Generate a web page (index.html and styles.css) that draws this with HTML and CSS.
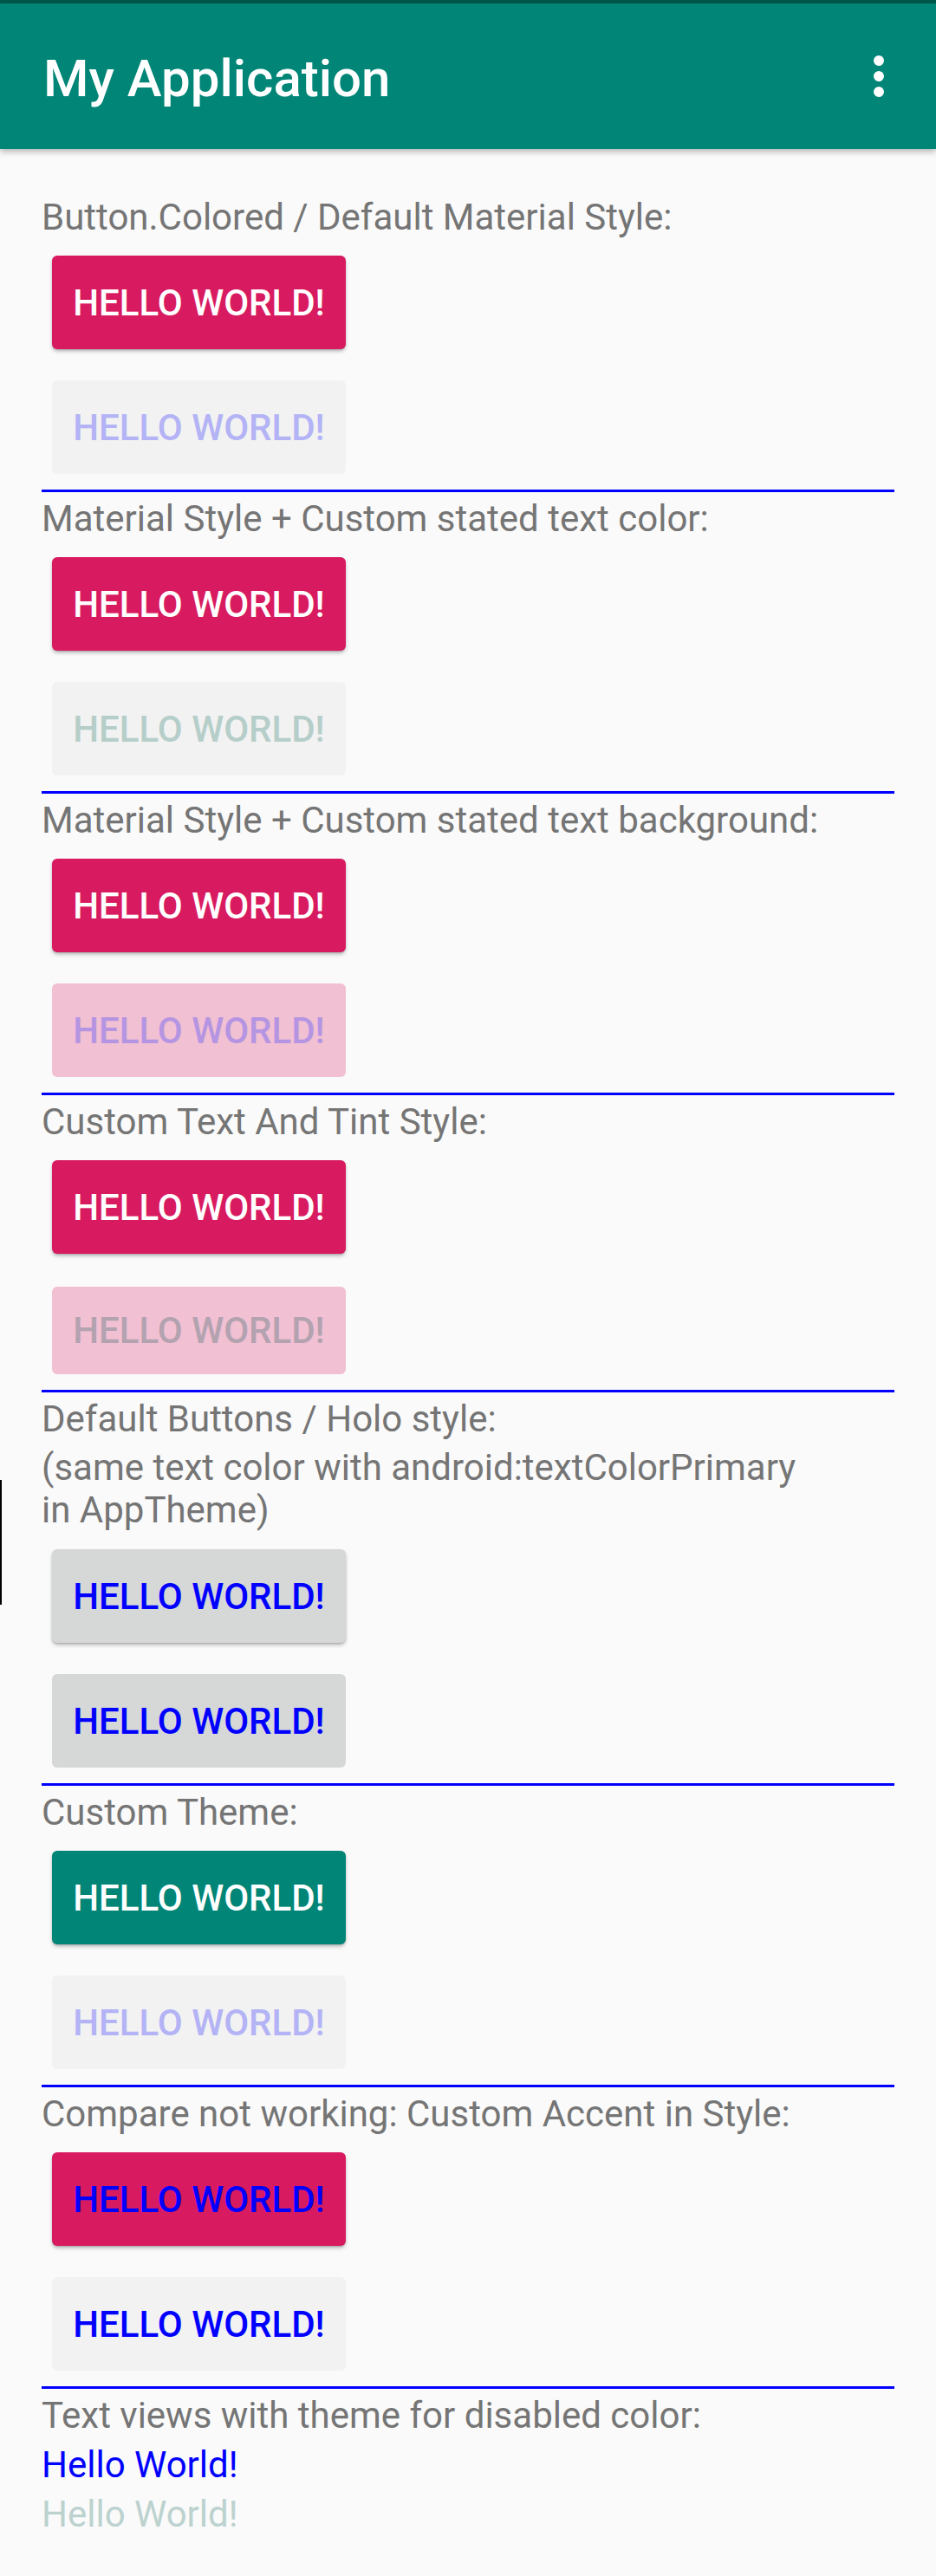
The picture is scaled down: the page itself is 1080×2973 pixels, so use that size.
FILE: index.html
```html
<!DOCTYPE html>
<html lang="en">
<head>
<meta charset="utf-8">
<title>My Application</title>
<link rel="stylesheet" href="styles.css">
</head>
<body>
<div class="status-bar"></div>
<header class="toolbar">
  <h1 class="title">My Application</h1>
  <svg class="overflow" width="72" height="72" viewBox="0 0 72 72" aria-label="More options">
    <circle cx="36" cy="18" r="6"/>
    <circle cx="36" cy="36" r="6"/>
    <circle cx="36" cy="54" r="6"/>
  </svg>
</header>
<div class="edge-mark"></div>
<main class="content">
  <section class="group">
    <p class="label">Button.Colored / Default Material Style:</p>
    <div class="btn-row"><button class="btn btn-accent">Hello World!</button></div>
    <div class="btn-row"><button class="btn btn-disabled txt-blue-dis">Hello World!</button></div>
  </section>
  <div class="divider"></div>
  <section class="group">
    <p class="label">Material Style + Custom stated text color:</p>
    <div class="btn-row"><button class="btn btn-accent">Hello World!</button></div>
    <div class="btn-row"><button class="btn btn-disabled txt-teal-dis">Hello World!</button></div>
  </section>
  <div class="divider"></div>
  <section class="group">
    <p class="label">Material Style + Custom stated text background:</p>
    <div class="btn-row"><button class="btn btn-accent">Hello World!</button></div>
    <div class="btn-row"><button class="btn btn-pink-dis txt-purple-dis">Hello World!</button></div>
  </section>
  <div class="divider"></div>
  <section class="group">
    <p class="label">Custom Text And Tint Style:</p>
    <div class="btn-row"><button class="btn btn-accent">Hello World!</button></div>
    <div class="btn-row btn-row-tint"><button class="btn btn-pink-dis btn-short txt-mauve-dis">Hello World!</button></div>
  </section>
  <div class="divider"></div>
  <section class="group">
    <p class="label">Default Buttons / Holo style:</p>
    <p class="label label-multi">(same text color with android:textColorPrimary<br>in AppTheme)</p>
    <div class="btn-row"><button class="btn btn-holo">Hello World!</button></div>
    <div class="btn-row"><button class="btn btn-holo btn-flat">Hello World!</button></div>
  </section>
  <div class="divider"></div>
  <section class="group">
    <p class="label">Custom Theme:</p>
    <div class="btn-row"><button class="btn btn-primary">Hello World!</button></div>
    <div class="btn-row"><button class="btn btn-disabled txt-blue-dis">Hello World!</button></div>
  </section>
  <div class="divider"></div>
  <section class="group">
    <p class="label">Compare not working: Custom Accent in Style:</p>
    <div class="btn-row"><button class="btn btn-accent txt-blue">Hello World!</button></div>
    <div class="btn-row"><button class="btn btn-disabled txt-blue">Hello World!</button></div>
  </section>
  <div class="divider"></div>
  <section class="group">
    <p class="label">Text views with theme for disabled color:</p>
    <p class="label text-blue">Hello World!</p>
    <p class="label text-disabled">Hello World!</p>
  </section>
</main>
</body>
</html>
```
FILE: styles.css
```css
* {
  box-sizing: border-box;
}

html, body {
  margin: 0;
  padding: 0;
}

body {
  background: #FAFAFA;
  font-family: Roboto, "Liberation Sans", sans-serif;
  width: 1080px;
  min-height: 2973px;
  position: relative;
}

.status-bar {
  height: 4px;
  background: #00574B;
}

.toolbar {
  position: relative;
  z-index: 2;
  height: 168px;
  background: #008577;
  display: flex;
  align-items: center;
  padding: 5px 0 0 50px;
  box-shadow: 0 3px 7px rgba(0, 0, 0, 0.28);
}

.title {
  margin: 0;
  color: #FFFFFF;
  font-size: 60px;
  font-weight: 500;
  line-height: 70px;
}

.overflow {
  margin-left: auto;
  margin-right: 30px;
  margin-top: -5px;
  fill: #FFFFFF;
}

.edge-mark {
  position: absolute;
  left: 0;
  top: 1708px;
  width: 2px;
  height: 144px;
  background: #000000;
}

.content {
  padding: 48px 48px 0;
}

.group {
  display: flex;
  flex-direction: column;
}

.label {
  margin: 0;
  padding: 6px 0 2px;
  font-size: 42px;
  line-height: 49px;
  color: #757575;
}

.label-multi {
  padding-top: 5px;
  padding-bottom: 3px;
}

.text-blue {
  color: #0000FF;
}

.text-disabled {
  color: #BCD2CF;
}

.divider {
  height: 3px;
  background: #0000FF;
}

.btn-row {
  padding: 18px 12px;
}

.btn-row-tint {
  padding: 20px 12px 18px;
}

.btn {
  display: flex;
  align-items: center;
  justify-content: center;
  width: 339px;
  height: 108px;
  border: 0;
  border-radius: 6px;
  padding: 0;
  font-family: Roboto, "Liberation Sans", sans-serif;
  font-size: 42px;
  font-weight: 500;
  text-transform: uppercase;
  color: #FFFFFF;
}

.btn-short {
  height: 101px;
}

.btn-accent {
  background: #D81B60;
  box-shadow: 0 3px 5px -1px rgba(0, 0, 0, 0.3), 0 1px 2px rgba(0, 0, 0, 0.12);
}

.btn-primary {
  background: #008577;
  box-shadow: 0 3px 5px -1px rgba(0, 0, 0, 0.3), 0 1px 2px rgba(0, 0, 0, 0.12);
}

.btn-disabled {
  background: #F2F2F2;
}

.btn-pink-dis {
  background: #F1C0D2;
}

.btn-holo {
  background: #D6D7D7;
  color: #0000FF;
  box-shadow: 0 3px 5px -1px rgba(0, 0, 0, 0.3), 0 1px 2px rgba(0, 0, 0, 0.12);
}

.btn-flat {
  box-shadow: none;
}

.txt-blue {
  color: #0000FF;
}

.txt-blue-dis {
  color: #B3B3F5;
}

.txt-teal-dis {
  color: #B6CEC9;
}

.txt-purple-dis {
  color: #B595E2;
}

.txt-mauve-dis {
  color: #B3A2AF;
}
```
